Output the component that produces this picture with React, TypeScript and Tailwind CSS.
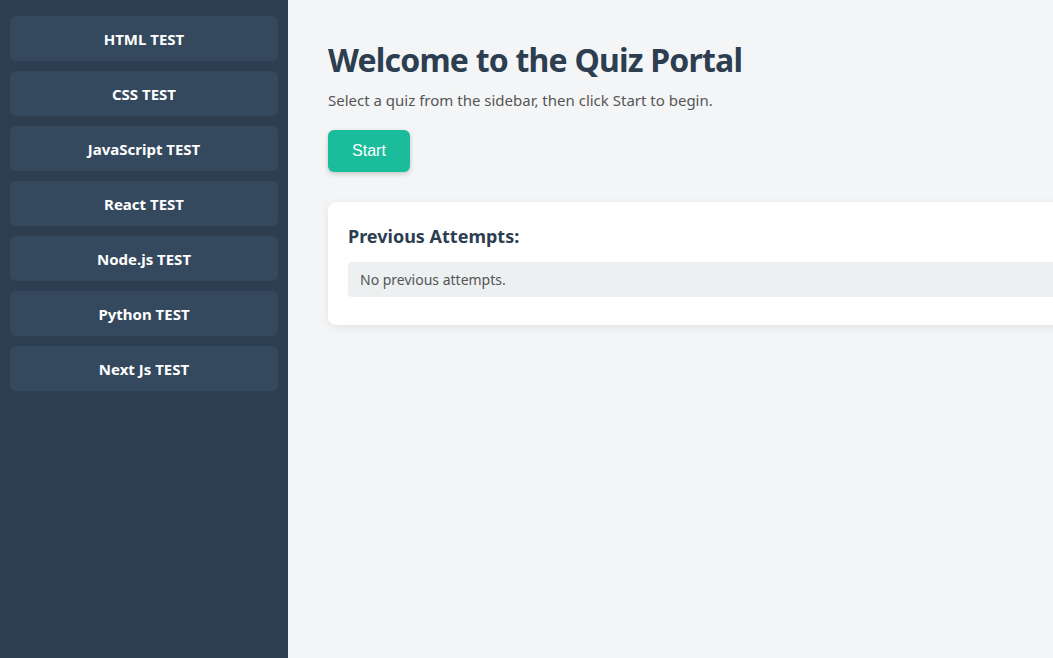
import React from "react";

const quizzes = ["HTML TEST", "CSS TEST", "JavaScript TEST", "React TEST", "Node.js TEST", "Python TEST", "Next Js TEST"];

export default function App() {
  return (
    <div className="flex h-[658px] w-[1053px] overflow-hidden bg-[#f4f5f7]" style={{ fontFamily: '"Noto Sans", "Open Sans", sans-serif' }}>
      <aside className="flex w-[288px] shrink-0 flex-col gap-[10px] bg-[#2c3e50] p-[10px] pt-[16px]">
        {quizzes.map((q) => (
          <button key={q} className="h-[45px] w-full rounded-[6px] bg-[#34495e] pt-[2px] text-[15px] font-bold text-white">
            {q}
          </button>
        ))}
      </aside>
      <main className="flex min-w-0 flex-1 flex-col items-start pl-[40px] pt-[38px]">
        <h1 className="text-[32px] font-bold leading-[44px] tracking-[-0.8px] text-[#2c3e50]">Welcome to the Quiz Portal</h1>
        <p className="mt-[8px] text-[15px] leading-[20px] text-[#555]">Select a quiz from the sidebar, then click Start to begin.</p>
        <button className="mt-[20px] h-[42px] w-[82px] rounded-[6px] bg-[#1abc9c] text-[16px] text-white shadow-[0_2px_5px_rgba(0,0,0,0.2)]" style={{ fontFamily: '"Liberation Sans", Arial, sans-serif' }}>
          Start
        </button>
        <section className="mt-[30px] w-[800px] shrink-0 rounded-[8px] bg-white px-[20px] pb-[28px] pt-[22px] shadow-[0_2px_8px_rgba(0,0,0,0.08)]">
          <h2 className="text-[18px] font-bold leading-[24px] text-[#2c3e50]">Previous Attempts:</h2>
          <div className="mt-[14px] h-[35px] rounded-[4px] bg-[#ecf0f1] px-[12px] text-[14px] leading-[35px] text-[#555]">No previous attempts.</div>
        </section>
      </main>
    </div>
  );
}
